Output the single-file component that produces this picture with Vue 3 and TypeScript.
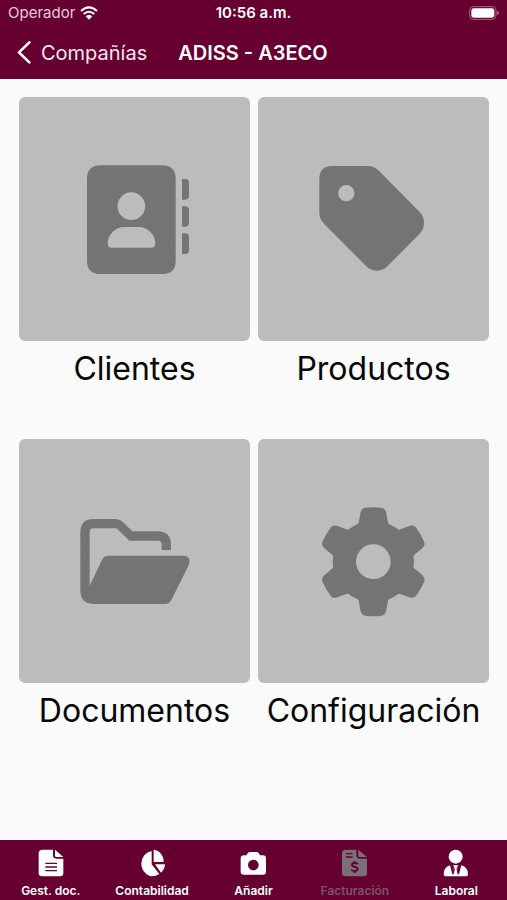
<script setup lang="ts">
import { ref } from 'vue'

interface Section {
  id: string
  label: string
}

const sections: Section[] = [
  { id: 'clientes', label: 'Clientes' },
  { id: 'productos', label: 'Productos' },
  { id: 'documentos', label: 'Documentos' },
  { id: 'configuracion', label: 'Configuración' },
]

const tabs: Section[] = [
  { id: 'gestion', label: 'Gest. doc.' },
  { id: 'contabilidad', label: 'Contabilidad' },
  { id: 'anadir', label: 'Añadir' },
  { id: 'facturacion', label: 'Facturación' },
  { id: 'laboral', label: 'Laboral' },
]

const current = ref('facturacion')
const gearAngles = [0, 60, 120, 180, 240, 300]
</script>

<template>
  <div class="screen">
    <header class="header">
      <div class="status">
        <div class="carrier">
          <span>Operador</span>
          <svg class="wifi" viewBox="0 0 54 42" aria-hidden="true">
            <path d="M3 15Q27-7 51 15" />
            <path d="M11 24Q27 10 43 24" />
            <path class="dot" d="M17 31Q27 22 37 31L27 41Z" />
          </svg>
        </div>
        <time class="clock">10:56 a.m.</time>
        <svg class="battery" viewBox="0 0 90 42" aria-hidden="true">
          <rect class="shell" x="2" y="2" width="79" height="38" rx="12" />
          <rect class="charge" x="7" y="7" width="69" height="28" rx="7" />
          <path class="shell-tip" d="M84 14Q90 17 90 21T84 28Z" />
        </svg>
      </div>
      <div class="bar">
        <button class="back" type="button">
          <svg class="chevron" viewBox="0 0 42 69" aria-hidden="true">
            <path d="M37 4L6 34L37 64" />
          </svg>
          <span>Compañías</span>
        </button>
        <h1 class="title">ADISS - A3ECO</h1>
      </div>
    </header>

    <main class="grid">
      <button v-for="section in sections" :key="section.id" class="section" type="button">
        <span class="tile">
          <svg v-if="section.id === 'clientes'" class="glyph" viewBox="33 44 324 324" aria-hidden="true">
            <path
              fill-rule="evenodd"
              d="M92 45H276Q317 45 317 86V331Q317 371 276 371H92Q51 371 51 331V86Q51 45 92 45ZM184 126A41 41 0 1 0 184 209A41 41 0 1 0 184 126ZM165 230Q141 230 127 246Q113 261 113 279Q113 292 124 292H246Q256 292 256 279Q256 261 242 246Q228 230 204 230Z"
            />
            <path d="M336 86H346Q357 87 357 98V137Q357 147 346 148H336ZM336 168H346Q357 169 357 179V218Q357 228 346 229H336ZM336 249H346Q357 250 357 261V300Q357 311 346 311H336Z" />
          </svg>
          <svg v-else-if="section.id === 'productos'" class="glyph" viewBox="45 44 324 324" aria-hidden="true">
            <path
              fill-rule="evenodd"
              d="M82 47H188Q207 47 220 60L344 185Q357 198 357 218Q357 237 344 250L247 348Q234 361 215 361Q197 361 184 348L57 220Q43 206 43 187V86Q43 47 82 47ZM124 104A24.500 24.500 0 1 0 124 153A24.500 24.500 0 1 0 124 104Z"
            />
          </svg>
          <svg v-else-if="section.id === 'documentos'" class="glyph" viewBox="48 35 324 324" aria-hidden="true">
            <path
              d="M87 71H148Q163 71 174 81L202 108H278Q318 109 318 148V164H290V147Q290 136 279 136H193L155 99H86Q74 99 74 111V271L112 192Q117 181 130 181H355Q368 181 373 192Q376 200 370 212L319 314Q313 326 300 326H87Q46 326 46 285V111Q46 71 87 71Z"
            />
          </svg>
          <svg v-else class="glyph" viewBox="45 35 324 324" aria-hidden="true">
            <circle class="ring" cx="205" cy="199" r="87" />
            <path
              v-for="angle in gearAngles"
              :key="angle"
              :transform="`rotate(${angle} 205 199)`"
              d="M158 95Q160 84 162 76L167 50Q170 39 180 37Q205 34 230 37Q240 39 243 50L248 76Q250 84 252 95Q205 110 158 95Z"
            />
          </svg>
        </span>
        <span class="caption">{{ section.label }}</span>
      </button>
    </main>

    <nav class="tabs" aria-label="Principal">
      <button
        v-for="tab in tabs"
        :key="tab.id"
        class="tab"
        :class="{ current: tab.id === current }"
        :aria-current="tab.id === current ? 'page' : undefined"
        type="button"
        @click="current = tab.id"
      >
        <svg v-if="tab.id === 'gestion'" class="tab-icon" viewBox="112 57 84 84" aria-hidden="true">
          <path
            fill-rule="evenodd"
            d="M129 59H160V76Q160 86 170 86H191V129Q191 139 181 139H128Q117 139 117 129V70Q117 59 129 59ZM137 98V102H172V98ZM137 109V113H172V109ZM137 120V124H172V120Z"
          />
          <path d="M166 59L191 81H170Q166 81 166 77Z" />
        </svg>
        <svg v-else-if="tab.id === 'contabilidad'" class="tab-icon" viewBox="414 57 84 84" aria-hidden="true">
          <path d="M455 63V103L478 132Q467 139 456 139Q443 138 434 127Q424 116 424 101Q424 87 433 76Q441 66 455 63Z" />
          <path d="M461 59Q475 60 483 71Q491 81 491 96H461Z" />
          <path d="M465 103H495Q494 118 483 128Z" />
        </svg>
        <svg v-else-if="tab.id === 'anadir'" class="tab-icon" viewBox="718 57 84 84" aria-hidden="true">
          <path
            fill-rule="evenodd"
            d="M751 66H771Q777 66 779 72L781 76H790Q799 76 799 86V125Q799 134 790 134H733Q723 134 723 125V86Q723 76 733 76H741L743 71Q745 66 751 66ZM761 89A16 16 0 1 0 761 121A16 16 0 1 0 761 89Z"
          />
        </svg>
        <svg v-else-if="tab.id === 'facturacion'" class="tab-icon" viewBox="264 57 84 84" aria-hidden="true">
          <path
            fill-rule="evenodd"
            d="M279 59H310V76Q310 86 320 86H342V129Q342 139 332 139H278Q267 139 267 129V70Q267 59 279 59ZM279 69V73H299V69ZM279 79V83H299V79Z"
          />
          <path d="M316 59L342 81H320Q316 81 316 77Z" />
          <path class="currency" d="M315 102C309 98 297 97 297 104C297 112 314 108 314 117C313 125 301 124 294 120M305 94V99M305 123V129" />
        </svg>
        <svg v-else class="tab-icon" viewBox="568 57 84 84" aria-hidden="true">
          <circle cx="609" cy="80" r="21" />
          <path d="M592 106L600 136L604 120L600 106H618L614 120L618 136L626 106Q646 112 646 133Q646 139 641 139H578Q573 139 573 133Q573 112 592 106Z" />
          <path class="tie" d="M596 105L602 131L605 116L600 106M622 105L616 131L613 116L618 106" />
        </svg>
        <span>{{ tab.label }}</span>
      </button>
    </nav>
  </div>
</template>

<style>
body {
  margin: 0;
  background: #fafafa;
}
</style>

<style scoped>
.screen {
  display: flex;
  flex-direction: column;
  min-height: 100vh;
  background: #fafafa;
  color: #080808;
  font-family: Inter, 'Liberation Sans', sans-serif;
}

button {
  margin: 0;
  padding: 0;
  border: 0;
  background: none;
  color: inherit;
  font: inherit;
  cursor: pointer;
}

.header {
  background: #650030;
  color: #fff;
}

.status {
  display: grid;
  grid-template-columns: 1fr auto 1fr;
  align-items: center;
  height: 26px;
  padding: 0 8px;
  font-size: 15px;
  line-height: 20px;
}

.carrier {
  display: flex;
  align-items: center;
  gap: 5px;
  color: #e5ccd8;
}

.wifi {
  width: 18px;
  height: 14px;
  fill: none;
  stroke: #fff;
  stroke-width: 6;
}

.wifi .dot {
  fill: #fff;
  stroke: none;
}

.clock {
  font-weight: 600;
}

.battery {
  justify-self: end;
  width: 30px;
  height: 14px;
}

.shell {
  fill: none;
  stroke: #a66685;
  stroke-width: 3;
}

.shell-tip {
  fill: #a66685;
}

.charge {
  fill: #fff;
}

.bar {
  display: flex;
  align-items: center;
  gap: 31px;
  height: 53px;
  padding: 0 17px;
}

.back {
  display: flex;
  align-items: center;
  gap: 10px;
  color: #f5e6ee;
  font-size: 20px;
  line-height: 28px;
}

.chevron {
  width: 14px;
  height: 23px;
  fill: none;
  stroke: #fff;
  stroke-width: 8;
  stroke-linecap: round;
  stroke-linejoin: round;
}

.title {
  margin: 0;
  font-size: 20px;
  line-height: 28px;
  font-weight: 600;
}

.grid {
  flex: 1;
  display: grid;
  grid-template-columns: 1fr 1fr;
  align-content: start;
  gap: 48px 8px;
  padding: 18px 18px 48px 19px;
}

.section {
  display: flex;
  flex-direction: column;
  gap: 6px;
}

.tile {
  display: flex;
  align-items: center;
  justify-content: center;
  width: 100%;
  height: 244px;
  border-radius: 6px;
  background: #bdbbbc;
}

.glyph {
  width: 108px;
  height: 108px;
  overflow: visible;
  fill: #757374;
}

.ring {
  fill: none;
  stroke: #757374;
  stroke-width: 70;
}

.caption {
  width: 100%;
  font-size: 32px;
  line-height: 44px;
  text-align: center;
}

.tabs {
  display: grid;
  grid-template-columns: repeat(5, 1fr);
  height: 60px;
  background: #650030;
  color: #fff;
}

.tab {
  display: flex;
  flex-direction: column;
  align-items: center;
  gap: 5px;
  padding-top: 9px;
  font-size: 12px;
  line-height: 18px;
  font-weight: 600;
}

.tab.current {
  color: #7a5468;
}

.tab-icon {
  width: 28px;
  height: 28px;
  fill: currentColor;
}

.tab.current .tab-icon {
  color: #7c7078;
}

.currency {
  fill: none;
  stroke: #650030;
  stroke-width: 6;
}

.tie {
  fill: none;
  stroke: #650030;
  stroke-width: 3;
}
</style>
